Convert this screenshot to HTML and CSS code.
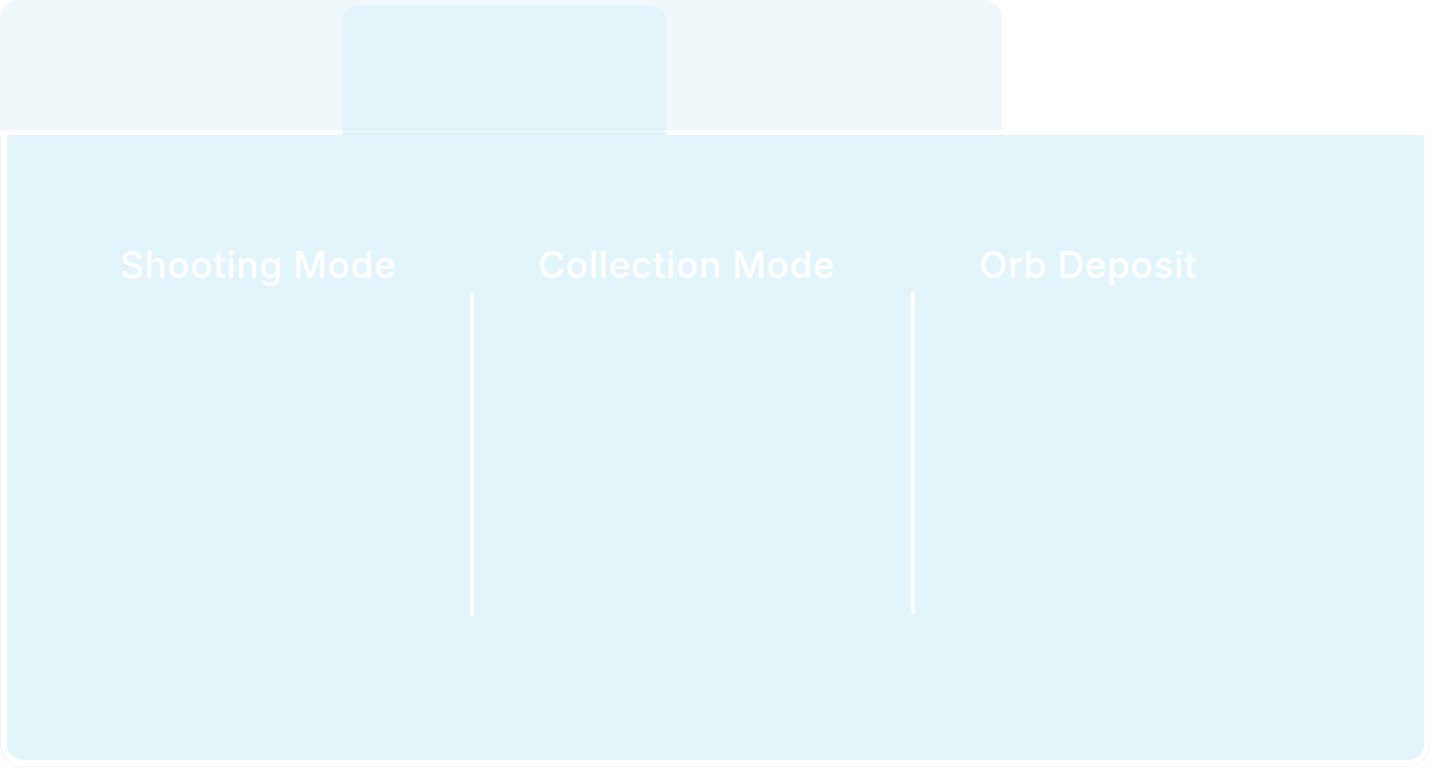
FILE: index.html
```html
<!DOCTYPE html>
<html lang="en">
<head>
  <meta charset="UTF-8" />
  <title>Modes</title>
  <link rel="stylesheet" href="styles.css">
</head>
<body>

  <div class="tabs">
    <div class="tab"></div>
    <div class="tab active"></div>
    <div class="tab last"></div>
  </div>

  <div class="frame">
    <div class="panel">
      <h2 class="mode first">Shooting Mode</h2>
      <div class="divider"></div>
      <h2 class="mode second">Collection Mode</h2>
      <div class="divider second"></div>
      <h2 class="mode third">Orb Deposit</h2>
    </div>
  </div>

</body>
</html>
```

FILE: styles.css
```css
body {
  margin: 0;
  padding: 0;
  background: #ffffff;
  font-family: Inter, "Noto Sans", sans-serif;
  overflow: hidden;
}

.tabs {
  width: 1002px;
  height: 130px;
  display: flex;
  background: #eef8fb;
  border-radius: 18px 18px 0 0;
}

.tab {
  flex: 0 0 342px;
}

.tab.last {
  flex: 1;
}

.tab.active {
  position: relative;
  flex: 0 0 325px;
  height: 126px;
  margin-top: 5px;
  background: #e1f4fa;
  border-radius: 16px 16px 0 0;
}

.tab.active::after {
  content: "";
  position: absolute;
  left: 0;
  right: 0;
  bottom: -5px;
  height: 4px;
  background: #e1f4fa;
}

.frame {
  margin-top: 5px;
  height: 625px;
  padding: 0 5px 6px 6px;
  border: 1px solid #ebf6fb;
  border-top: none;
  border-radius: 0 0 22px 22px;
}

.panel {
  height: 100%;
  background: #e1f4fa;
  border-radius: 4px 4px 16px 16px;
  display: grid;
  grid-template-columns: 350px 4px 437px 4px 1fr;
  grid-template-rows: 158px 323px;
  padding-left: 113px;
  box-sizing: border-box;
}

.mode {
  grid-row: 1;
  margin: 110px 0 0 0;
  padding-left: 64px;
  font-size: 37px;
  line-height: 40px;
  font-weight: 500;
  color: #ffffff;
  letter-spacing: 0.6px;
  white-space: nowrap;
}

.mode.first {
  grid-column: 1;
  padding-left: 0;
}

.mode.second {
  grid-column: 3;
}

.mode.third {
  grid-column: 5;
}

.divider {
  grid-row: 2;
  grid-column: 2;
  background: #ffffff;
  border-radius: 2px;
}

.divider.second {
  grid-column: 4;
  margin: -2px 0 2px;
}
```
